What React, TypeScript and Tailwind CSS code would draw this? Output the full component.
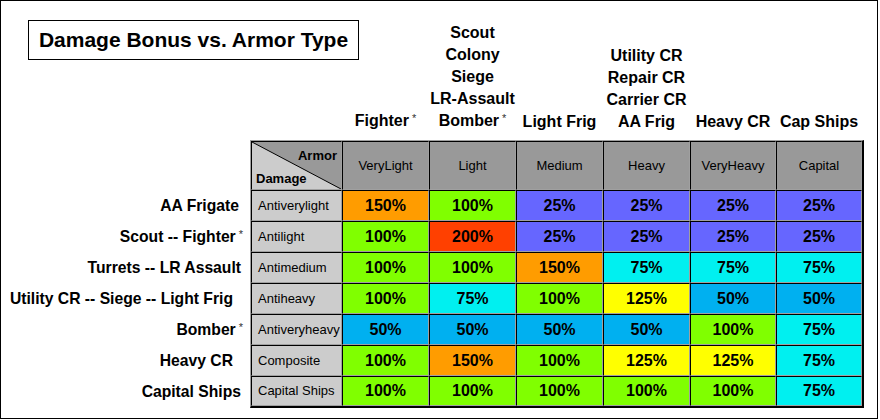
import React from "react";

// couleurs des cellules
const fill: Record<string, string> = {
  O: "bg-[#ff9c00]",
  G: "bg-[#80ff00]",
  R: "bg-[#ff4000]",
  P: "bg-[#6666ff]",
  C: "bg-[#00f0f0]",
  Y: "bg-[#ffff00]",
  S: "bg-[#00b0f0]",
};

const columns = [
  { w: "w-[87px]", lines: ["Fighter *"] },
  { w: "w-[87px]", lines: ["Scout", "Colony", "Siege", "LR-Assault", "Bomber *"] },
  { w: "w-[87px]", lines: ["Light Frig"] },
  { w: "w-[87px]", lines: ["Utility CR", "Repair CR", "Carrier CR", "AA Frig"] },
  { w: "w-[86px]", lines: ["Heavy CR"] },
  { w: "w-[86px]", lines: ["Cap Ships"] },
];

const armor = ["VeryLight", "Light", "Medium", "Heavy", "VeryHeavy", "Capital"];

const rows = [
  { label: "AA Frigate", pr: "pr-[11px]", type: "Antiverylight", cells: [["150", "O"], ["100", "G"], ["25", "P"], ["25", "P"], ["25", "P"], ["25", "P"]] },
  { label: "Scout -- Fighter *", pr: "pr-[7px]", type: "Antilight", cells: [["100", "G"], ["200", "R"], ["25", "P"], ["25", "P"], ["25", "P"], ["25", "P"]] },
  { label: "Turrets -- LR Assault", pr: "pr-[9px]", type: "Antimedium", cells: [["100", "G"], ["100", "G"], ["150", "O"], ["75", "C"], ["75", "C"], ["75", "C"]] },
  { label: "Utility CR -- Siege -- Light Frig", pr: "pr-[17px]", type: "Antiheavy", cells: [["100", "G"], ["75", "C"], ["100", "G"], ["125", "Y"], ["50", "S"], ["50", "S"]] },
  { label: "Bomber *", pr: "pr-[7px]", type: "Antiveryheavy", cells: [["50", "S"], ["50", "S"], ["50", "S"], ["50", "S"], ["100", "G"], ["75", "C"]] },
  { label: "Heavy CR", pr: "pr-[17px]", type: "Composite", cells: [["100", "G"], ["150", "O"], ["100", "G"], ["125", "Y"], ["125", "Y"], ["75", "C"]] },
  { label: "Capital Ships", pr: "pr-[9px]", type: "Capital Ships", cells: [["100", "G"], ["100", "G"], ["100", "G"], ["100", "G"], ["100", "G"], ["75", "C"]] },
];

const cell =
  "border-t border-l border-r border-b border-t-black border-l-black border-r-[#a0a0a0] border-b-[#a0a0a0] flex items-center";

function Label({ text }: { text: string }) {
  // astérisque en petit, surélevé
  if (text.endsWith(" *")) {
    return (
      <span className="whitespace-nowrap">
        {text.slice(0, -2)}
        <span className="relative -top-[4px] ml-[3px] text-[11px] font-normal text-[#333]">*</span>
      </span>
    );
  }
  return <span className="whitespace-nowrap">{text}</span>;
}

export default function App() {
  return (
    <div className="w-[880px] h-[420px] bg-white font-['Liberation_Sans',Arial,sans-serif] text-black">
      <div className="w-[878px] h-[419px] border border-black bg-white">
        {/* en-tête */}
        <div className="flex h-[139px]">
          <div className="w-[249px] shrink-0 pt-[19px] pl-[27px]">
            <div className="w-[331px] h-[40px] border border-black flex items-center justify-center text-[21px] font-bold whitespace-nowrap">
              Damage Bonus vs. Armor Type
            </div>
          </div>
          <div className="w-[92px] shrink-0" />
          {columns.map((c, i) => (
            <div
              key={i}
              className={`${c.w} shrink-0 flex flex-col justify-end items-center pb-[7px] text-[16px] font-bold leading-[22px]`}
            >
              {c.lines.map((l) => (
                <Label key={l} text={l} />
              ))}
            </div>
          ))}
        </div>

        <div className="flex">
          {/* libellés des vaisseaux */}
          <div className="w-[249px] shrink-0 flex flex-col">
            <div className="h-[50px]" />
            {rows.map((r) => (
              <div
                key={r.label}
                className={`h-[31px] flex items-center justify-end ${r.pr} text-[15.7px] font-bold`}
              >
                <Label text={r.label} />
              </div>
            ))}
          </div>

          {/* tableau */}
          <div className="border-t border-l border-[#a0a0a0] border-r-2 border-b-2 border-r-black border-b-black">
            <div className="grid grid-cols-[91px_87px_87px_87px_87px_86px_86px] grid-rows-[49px_31px_31px_31px_31px_31px_31px_30px]">
              <div className={`${cell} relative bg-[#cccccc] text-[13px] font-bold`}>
                <svg className="absolute inset-0 w-full h-full" viewBox="0 0 89 47" preserveAspectRatio="none">
                  <polygon points="0,0 89,0 89,47" fill="#999999" />
                  <line x1="0" y1="0" x2="89" y2="47" stroke="black" strokeWidth="1" />
                </svg>
                <span className="absolute right-[4px] top-[4px]">Armor</span>
                <span className="absolute left-[4px] bottom-[1px]">Damage</span>
              </div>
              {armor.map((a) => (
                <div key={a} className={`${cell} justify-center bg-[#999999] text-[13px]`}>
                  {a}
                </div>
              ))}
              {rows.map((r) => (
                <React.Fragment key={r.type}>
                  <div className={`${cell} bg-[#cccccc] pl-[6px] text-[13px] whitespace-nowrap`}>{r.type}</div>
                  {r.cells.map(([v, k], j) => (
                    <div key={j} className={`${cell} justify-center ${fill[k]} text-[16px] font-bold`}>
                      {v}%
                    </div>
                  ))}
                </React.Fragment>
              ))}
            </div>
          </div>
        </div>
      </div>
    </div>
  );
}
